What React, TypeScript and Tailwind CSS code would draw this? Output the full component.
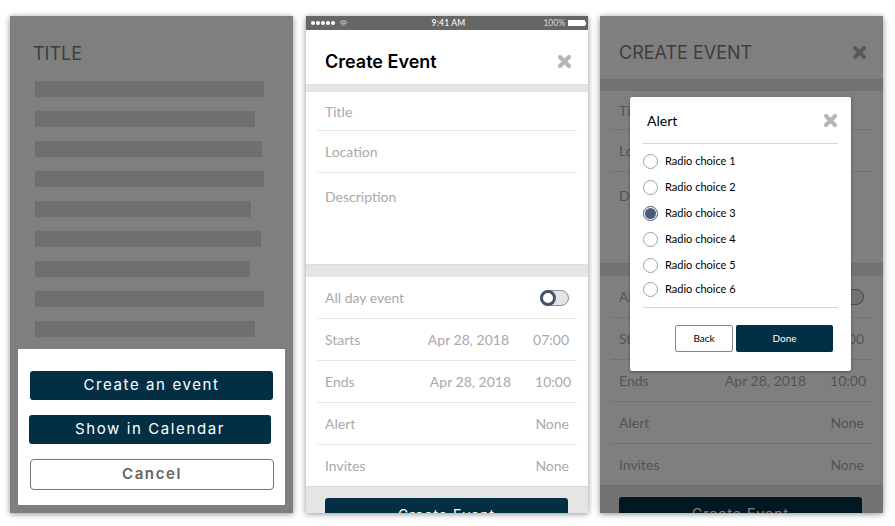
const body = { fontFamily: '"Lato", "Open Sans", sans-serif' };
const head = { fontFamily: '"Inter", "Roboto", sans-serif' };

const barWidths = ["w-[229px]", "w-[220px]", "w-[227px]", "w-[229px]", "w-[216px]", "w-[226px]", "w-[215px]", "w-[229px]", "w-[220px]"];
const radios = [
  { label: "Radio choice 1", cls: "h-[26px]" },
  { label: "Radio choice 2", cls: "h-[26px]" },
  { label: "Radio choice 3", cls: "h-[26px]", on: true },
  { label: "Radio choice 4", cls: "h-[27px]" },
  { label: "Radio choice 5", cls: "h-[25px]" },
  { label: "Radio choice 6", cls: "h-[23px]" },
];

function CloseIcon({ className }: { className: string }) {
  return (
    <svg viewBox="0 0 14 14" className={className}>
      <path d="M2.8 2.8 L11.2 11.2 M11.2 2.8 L2.8 11.2" stroke="currentColor" strokeWidth="3.8" strokeLinecap="round" fill="none" />
    </svg>
  );
}

function StatusBar() {
  return (
    <div className="h-[14px] bg-[#666666] flex items-center justify-between pl-[5px] pr-[2px] text-white text-[8.5px] leading-none" style={body}>
      <div className="w-[90px] flex items-center gap-[1px]">
        {[0, 1, 2, 3, 4].map((i) => (
          <span key={i} className="w-[4px] h-[4px] rounded-full bg-white" />
        ))}
        <svg viewBox="0 0 10 8" className="w-[9px] h-[7px] ml-[3px]">
          <path d="M0.5 3 Q5 -1 9.5 3 M2 4.6 Q5 2 8 4.6 M3.6 6.2 Q5 5 6.4 6.2" stroke="white" strokeWidth="0.8" fill="none" />
        </svg>
      </div>
      <span className="font-medium tracking-[0.2px]">9:41 AM</span>
      <div className="w-[90px] flex items-center justify-end gap-[3px] text-[#d8d8d8]">
        <span>100%</span>
        <span className="w-[17px] h-[6px] bg-white" />
        <span className="w-[1px] h-[3px] bg-white -ml-[3px]" />
      </div>
    </div>
  );
}

function Row({ label, date, value, shift }: { label: string; date?: string; value?: string; shift?: boolean }) {
  return (
    <div className="h-[42px] border-b border-[#e6e6e6] flex items-center pl-[8px] pr-[8px] text-[14px] text-[#a9a9a9]" style={body}>
      <span className="flex-1">{label}</span>
      {date && <span className={shift ? "mr-[24px]" : "mr-[24px]"}>{date}</span>}
      <span className={shift ? "-mr-[2px]" : ""}>{value}</span>
    </div>
  );
}

function EventForm() {
  return (
    <div>
      <div className="bg-[#e5e5e5] border-t border-[#dddddd] h-[8px]" />
      <div className="px-[11px]">
        <div className="h-[39px] border-b border-[#e6e6e6] flex items-center pl-[8px] text-[14px] text-[#a9a9a9]" style={body}>Title</div>
        <div className="h-[42px] border-b border-[#e6e6e6] flex items-center pl-[8px] text-[14px] text-[#a9a9a9]" style={body}>Location</div>
        <div className="h-[91px] pt-[13px] pl-[8px] text-[14px] text-[#a9a9a9]" style={body}>Description</div>
      </div>
      <div className="bg-[#e5e5e5] border-t border-[#dddddd] h-[13px]" />
      <div className="px-[11px]">
        <div className="h-[42px] border-b border-[#e6e6e6] flex items-center justify-between pl-[8px] pr-[8px] text-[14px] text-[#a9a9a9]" style={body}>
          <span>All day event</span>
          <span className="w-[29px] h-[16px] rounded-full bg-[#e4e4e4] border border-[#8a8f97] relative">
            <span className="absolute -left-[1px] -top-[1px] w-[16px] h-[16px] rounded-full bg-white border-[3px] border-[#44556b]" />
          </span>
        </div>
        <Row label="Starts" date="Apr 28, 2018" value="07:00" />
        <Row label="Ends" date="Apr 28, 2018" value="10:00" shift />
        <Row label="Alert" value="None" />
        <div className="h-[41px] flex items-center justify-between pl-[8px] pr-[8px] text-[14px] text-[#a9a9a9]" style={body}>
          <span>Invites</span>
          <span>None</span>
        </div>
      </div>
      <div className="bg-[#e5e5e5] border-t border-[#d8d8d8] h-[28px] overflow-hidden px-[19px] pt-[11px]">
        <div className="h-[30px] w-[243px] rounded-[3px] bg-[#032f45] text-white text-[14px] tracking-[1px] text-center pt-[6px]" style={head}>Create Event</div>
      </div>
    </div>
  );
}

export default function App() {
  return (
    <div className="w-[895px] h-[526px] bg-white overflow-hidden flex pt-[16px] pl-[10px] gap-[13px]">
      {/* list screen with action sheet */}
      <div className="relative w-[283px] h-[497px] bg-white shadow-[0_1px_6px_rgba(0,0,0,0.45)] overflow-hidden px-[25px] pt-[27px]">
        <div className="text-[18px] leading-[22px] text-[#7c7c7c] -ml-[2px]" style={head}>TITLE</div>
        <div className="mt-[16px] flex flex-col gap-[14px]">
          {barWidths.map((w, i) => (
            <div key={i} className={`${w} h-[16px] bg-[#dedede]`} />
          ))}
        </div>
        <div className="absolute inset-0 bg-black/50" />
        <div className="absolute left-[8px] top-[333px] w-[267px] h-[156px] bg-white rounded-[1px] pt-[22px] tracking-[1.6px]" style={head}>
          <div className="ml-[12px] w-[243px] h-[29px] rounded-[3px] bg-[#032f45] text-white text-[15px] flex items-center justify-center">Create an event</div>
          <div className="ml-[11px] mt-[15px] w-[242px] h-[29px] rounded-[3px] bg-[#032f45] text-white text-[15px] flex items-center justify-center">Show in Calendar</div>
          <div className="ml-[12px] mt-[15px] w-[244px] h-[31px] rounded-[4px] border border-[#777777] text-[#666666] font-semibold text-[15px] flex items-center justify-center">Cancel</div>
        </div>
      </div>

      {/* create event form */}
      <div className="w-[282px] h-[497px] bg-white shadow-[0_1px_6px_rgba(0,0,0,0.45)] overflow-hidden">
        <StatusBar />
        <div className="h-[54px] flex items-center justify-between pl-[19px] pr-[16px] pt-[11px] pb-[3px]">
          <span className="text-[18px] font-semibold text-black" style={head}>Create Event</span>
          <CloseIcon className="w-[15px] h-[15px] text-[#b5b5b5]" />
        </div>
        <EventForm />
      </div>

      {/* alert modal over the form */}
      <div className="relative -ml-[1px] w-[283px] h-[497px] bg-white shadow-[0_1px_6px_rgba(0,0,0,0.45)] overflow-hidden">
        <div className="h-[63px] flex items-center justify-between pl-[19px] pr-[16px] pt-[10px]">
          <span className="text-[18px] text-[#7c7c7c]" style={head}>CREATE EVENT</span>
          <CloseIcon className="w-[15px] h-[15px] text-[#b5b5b5]" />
        </div>
        <div className="-mt-[0px] [&>div>div:first-child]:h-[12px]">
          <EventForm />
        </div>
        <div className="absolute inset-0 bg-black/50" />
        <div className="absolute left-[30px] top-[81px] w-[221px] h-[274px] bg-white rounded-[2px] shadow-[0_1px_3px_rgba(0,0,0,0.4)] px-[13px]" style={body}>
          <div className="h-[47px] border-b border-[#d6d6d6] flex items-center justify-between pl-[4px] -mr-[0px]">
            <span className="text-[14px] text-black">Alert</span>
            <CloseIcon className="w-[15px] h-[15px] text-[#b5b5b5] mr-[0px]" />
          </div>
          <div className="pt-[4px] h-[164px] border-b border-[#d6d6d6]">
            {radios.map((r) => (
              <div key={r.label} className={`${r.cls} flex items-center gap-[7px] text-[11px] text-black`}>
                <span className={`w-[15px] h-[15px] rounded-full border border-[#8fa5b5] flex items-center justify-center ${r.on ? "border-[#44556b]" : ""}`}>
                  {r.on && <span className="w-[11px] h-[11px] rounded-full bg-[#4a5d75]" />}
                </span>
                {r.label}
              </div>
            ))}
          </div>
          <div className="mt-[17px] flex gap-[3px] pl-[32px] text-[10px]">
            <div className="w-[58px] h-[27px] rounded-[2px] border border-[#888888] text-black flex items-center justify-center">Back</div>
            <div className="w-[97px] h-[27px] rounded-[2px] bg-[#032f45] text-white flex items-center justify-center">Done</div>
          </div>
        </div>
      </div>
    </div>
  );
}
